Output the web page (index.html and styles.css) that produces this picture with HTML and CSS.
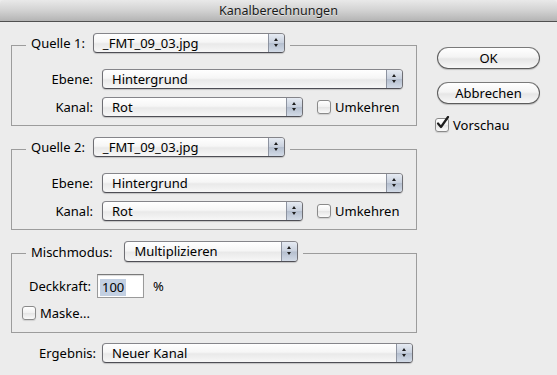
FILE: index.html
```html
<!DOCTYPE html>
<html lang="de">
<head>
<meta charset="UTF-8">
<title>Kanalberechnungen</title>
<link rel="stylesheet" href="styles.css">
</head>
<body>

<div class="window">
    <div class="titlebar">Kanalberechnungen</div>

    <div class="content">
        <div class="main">

            <fieldset class="group">
                <legend class="group-head">
                    <span class="head-label">Quelle 1:</span>
                    <span class="popup popup-source"><span class="popup-text">_FMT_09_03.jpg</span><span class="popup-arrows"></span></span>
                </legend>
                <div class="row">
                    <span class="row-label">Ebene:</span>
                    <span class="popup popup-wide"><span class="popup-text">Hintergrund</span><span class="popup-arrows"></span></span>
                </div>
                <div class="row">
                    <span class="row-label">Kanal:</span>
                    <span class="popup popup-channel"><span class="popup-text">Rot</span><span class="popup-arrows"></span></span>
                    <label class="check check-invert"><span class="box"></span>Umkehren</label>
                </div>
            </fieldset>

            <fieldset class="group">
                <legend class="group-head">
                    <span class="head-label">Quelle 2:</span>
                    <span class="popup popup-source"><span class="popup-text">_FMT_09_03.jpg</span><span class="popup-arrows"></span></span>
                </legend>
                <div class="row">
                    <span class="row-label">Ebene:</span>
                    <span class="popup popup-wide"><span class="popup-text">Hintergrund</span><span class="popup-arrows"></span></span>
                </div>
                <div class="row">
                    <span class="row-label">Kanal:</span>
                    <span class="popup popup-channel"><span class="popup-text">Rot</span><span class="popup-arrows"></span></span>
                    <label class="check check-invert"><span class="box"></span>Umkehren</label>
                </div>
            </fieldset>

            <fieldset class="group group-blend">
                <legend class="group-head">
                    <span class="head-label head-label-blend">Mischmodus:</span>
                    <span class="popup popup-blend"><span class="popup-text">Multiplizieren</span><span class="popup-arrows"></span></span>
                </legend>
                <div class="opacity-row">
                    <span class="opacity-label">Deckkraft:</span>
                    <span class="field"><span class="field-sel">100</span></span>
                    <span class="unit">%</span>
                </div>
                <label class="check check-mask"><span class="box"></span>Maske...</label>
            </fieldset>

            <div class="row result-row">
                <span class="row-label result-label">Ergebnis:</span>
                <span class="popup popup-result"><span class="popup-text">Neuer Kanal</span><span class="popup-arrows"></span></span>
            </div>

        </div>

        <div class="side">
            <button class="push">OK</button>
            <button class="push">Abbrechen</button>
            <label class="check check-preview">
                <span class="box">
                    <svg width="15" height="14" viewBox="0 0 15 14"><path d="M3 7.5 L6 11 L13 1" fill="none" stroke="#1c1c1c" stroke-width="2.2" stroke-linecap="round" stroke-linejoin="round"/></svg>
                </span>Vorschau
            </label>
        </div>
    </div>
</div>

</body>
</html>
```

FILE: styles.css
```css
/* Mac-Dialog, graue Aqua-Optik */
body {
    margin: 0;
    background-color: #ececec;
    font-family: "Noto Sans", "Liberation Sans", sans-serif;
    font-size: 13px;
    color: #000;
}
.window {
    width: 557px;
    height: 375px;
    background-color: #ececec;
}
.titlebar {
    height: 21px;
    line-height: 21px;
    text-align: center;
    font-size: 12.5px;
    color: #1a1a1a;
    text-shadow: 0 1px 0 rgba(255,255,255,0.5);
    background: linear-gradient(#e9e9e9, #d2d2d2 50%, #b4b4b4);
    border-bottom: 1px solid #505050;
    border-radius: 4px 4px 0 0;
}
.content {
    display: flex;
    padding: 11px 0 0 11px;
}
.main {
    width: 406px;
}

/* Gruppen */
.group {
    margin: 0 0 11px 0;
    padding: 12px 0 8px 0;
    border: 1px solid #9c9c9c;
    min-width: 0;
}
.group-head {
    display: flex;
    align-items: center;
    margin-left: 14px;
    padding: 0 5px 4px 5px;
}
.head-label {
    margin-right: 8px;
}
.head-label-blend {
    margin-right: 12px;
}
.row {
    display: flex;
    align-items: center;
    height: 20px;
    margin-bottom: 8px;
}
.row:last-child {
    margin-bottom: 0;
}
.row-label {
    width: 81px;
    margin-right: 9px;
    text-align: right;
}

/* Popup-Menüs */
.popup {
    display: flex;
    box-sizing: border-box;
    height: 20px;
    border: 1px solid #6f6f74;
    border-top-color: #85858a;
    border-bottom-color: #4e4e55;
    border-radius: 4px;
    background: linear-gradient(#ffffff, #f6f6f6 45%, #e9e9e9 55%, #f7f7f7);
    box-shadow: 0 1px 1px rgba(0,0,0,0.18);
    overflow: hidden;
}
.popup-text {
    flex: 1;
    padding-left: 9px;
    line-height: 18px;
    white-space: nowrap;
}
.popup-arrows {
    width: 15px;
    border-left: 1px solid #8d93a0;
    background: linear-gradient(#e6ebf3, #c9d1de 48%, #b5bfcf 52%, #d3dbe7);
    position: relative;
}
.popup-arrows::before,
.popup-arrows::after {
    content: "";
    position: absolute;
    left: 5px;
    border-left: 2.5px solid transparent;
    border-right: 2.5px solid transparent;
}
.popup-arrows::before {
    top: 4px;
    border-bottom: 3.5px solid #1e1e1e;
}
.popup-arrows::after {
    top: 10px;
    border-top: 3.5px solid #1e1e1e;
}
.popup-source {
    width: 192px;
}
.popup-wide {
    width: 301px;
}
.popup-channel {
    width: 201px;
}
.popup-blend {
    width: 174px;
    height: 21px;
}
.popup-result {
    width: 311px;
}

/* Checkboxen */
.check {
    display: flex;
    align-items: center;
}
.box {
    box-sizing: border-box;
    width: 14px;
    height: 14px;
    margin-right: 4px;
    border: 1px solid #8a8a8a;
    border-radius: 3px;
    background: linear-gradient(#ffffff, #f0f0f0 50%, #e4e4e4 51%, #fafafa);
    box-shadow: 0 1px 1px rgba(0,0,0,0.12);
    position: relative;
}
.box svg {
    position: absolute;
    left: -1px;
    top: -3px;
}
.check-invert {
    margin-left: 14px;
}

/* Deckkraft */
.group-blend {
    margin-top: 11px;
    padding-bottom: 10px;
}
.opacity-row {
    display: flex;
    align-items: center;
    margin: -4px 0 0 17px;
}
.opacity-label {
    margin-right: 6px;
}
.field {
    box-sizing: border-box;
    width: 47px;
    height: 24px;
    padding: 3px 0 0 2px;
    background: #fff;
    border: 1px solid #9a9a9a;
    border-top-color: #7a7a7a;
    box-shadow: inset 0 1px 1px rgba(0,0,0,0.15);
}
.field-sel {
    display: inline-block;
    background-color: #c3d0e2;
    padding: 0 2px;
    line-height: 17px;
}
.unit {
    margin-left: 9px;
}
.check-mask {
    margin: 6px 0 0 10px;
}

.result-row {
    height: 21px;
    margin-top: -2px;
}
.result-label {
    width: 85px;
    margin-right: 6px;
}

/* rechte Spalte */
.side {
    display: flex;
    flex-direction: column;
    align-items: flex-start;
    margin: 14px 0 0 20px;
}
.push {
    width: 103px;
    height: 22px;
    margin-bottom: 13px;
    padding: 0;
    font-family: inherit;
    font-size: 13px;
    color: #000;
    border: 1px solid #5c5c5c;
    border-top-color: #7a7a7a;
    border-radius: 11px;
    background: linear-gradient(#ffffff, #f4f4f4 45%, #e6e6e6 55%, #f8f8f8);
    box-shadow: 0 1px 1px rgba(0,0,0,0.2);
}
.check-preview {
    margin: -1px 0 0 -2px;
}
```
